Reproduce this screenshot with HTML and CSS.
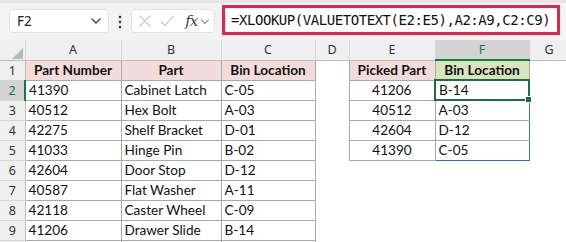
FILE: index.html
```html
<!DOCTYPE html>
<html lang="en">
<head>
  <meta charset="UTF-8">
  <title>XLOOKUP sheet</title>
  <link rel="stylesheet" href="styles.css">
</head>
<body>
  <div class="formula-bar">
    <div class="name-box">
      <span class="cell-ref">F2</span>
      <svg width="12" height="8" viewBox="0 0 12 8"><path d="M1.5 1.5 L6 6 L10.5 1.5" fill="none" stroke="#444" stroke-width="1.3"/></svg>
    </div>
    <div class="grip">
      <svg width="4" height="14" viewBox="0 0 4 14"><circle cx="2" cy="2" r="1.3" fill="#333"/><circle cx="2" cy="7" r="1.3" fill="#333"/><circle cx="2" cy="12" r="1.3" fill="#333"/></svg>
    </div>
    <div class="func-box">
      <svg width="14" height="14" viewBox="0 0 14 14"><path d="M1.5 1.5 L12.5 12.5 M12.5 1.5 L1.5 12.5" stroke="#c4c4c4" stroke-width="1.2"/></svg>
      <svg width="15" height="14" viewBox="0 0 15 14"><path d="M1 7.5 L5 11.5 L14 2" fill="none" stroke="#c4c4c4" stroke-width="1.2"/></svg>
      <span class="fx">fx</span>
      <svg width="10" height="7" viewBox="0 0 10 7"><path d="M1 1.5 L5 5.5 L9 1.5" fill="none" stroke="#888" stroke-width="1.1"/></svg>
    </div>
    <div class="formula-input">=XLOOKUP(VALUETOTEXT(E2:E5),A2:A9,C2:C9)</div>
  </div>

  <table class="sheet">
    <colgroup>
      <col class="w-rh"><col class="w-a"><col class="w-b"><col class="w-c"><col class="w-d"><col class="w-e"><col class="w-f"><col class="w-g">
    </colgroup>
    <tr class="col-heads">
      <th class="corner"><div class="corner-mark"><svg width="11" height="11" viewBox="0 0 11 11"><path d="M11 0 L11 11 L0 11 Z" fill="#b8b8b8"/></svg></div></th>
      <th>A</th><th>B</th><th>C</th><th>D</th><th>E</th><th class="active">F</th><th>G</th>
    </tr>
    <tr>
      <th class="rh">1</th>
      <td class="box head pink">Part Number</td><td class="box head pink">Part</td><td class="box head pink">Bin Location</td>
      <td></td>
      <td class="box head pink">Picked Part</td><td class="box head green">Bin Location</td><td></td>
    </tr>
    <tr>
      <th class="rh active">2</th>
      <td class="box">41390</td><td class="box">Cabinet Latch</td><td class="box">C-05</td>
      <td></td>
      <td class="box num">41206</td><td class="box spill selected">B-14</td><td></td>
    </tr>
    <tr>
      <th class="rh">3</th>
      <td class="box">40512</td><td class="box">Hex Bolt</td><td class="box">A-03</td>
      <td></td>
      <td class="box num">40512</td><td class="box spill">A-03</td><td></td>
    </tr>
    <tr>
      <th class="rh">4</th>
      <td class="box">42275</td><td class="box">Shelf Bracket</td><td class="box">D-01</td>
      <td></td>
      <td class="box num">42604</td><td class="box spill">D-12</td><td></td>
    </tr>
    <tr>
      <th class="rh">5</th>
      <td class="box">41033</td><td class="box">Hinge Pin</td><td class="box">B-02</td>
      <td></td>
      <td class="box num">41390</td><td class="box spill last">C-05</td><td></td>
    </tr>
    <tr>
      <th class="rh">6</th>
      <td class="box">42604</td><td class="box">Door Stop</td><td class="box">D-12</td>
      <td></td><td></td><td></td><td></td>
    </tr>
    <tr>
      <th class="rh">7</th>
      <td class="box">40587</td><td class="box">Flat Washer</td><td class="box">A-11</td>
      <td></td><td></td><td></td><td></td>
    </tr>
    <tr>
      <th class="rh">8</th>
      <td class="box">42118</td><td class="box">Caster Wheel</td><td class="box">C-09</td>
      <td></td><td></td><td></td><td></td>
    </tr>
    <tr>
      <th class="rh">9</th>
      <td class="box">41206</td><td class="box">Drawer Slide</td><td class="box">B-14</td>
      <td></td><td></td><td></td><td></td>
    </tr>
    <tr>
      <th class="rh"></th>
      <td class="box"></td><td class="box"></td><td class="box"></td>
      <td></td><td></td><td></td><td></td>
    </tr>
  </table>
</body>
</html>
```

FILE: styles.css
```css
body {
  margin: 0;
  background-color: white;
  font-family: Lato, "Noto Sans", sans-serif;
  overflow: hidden;
}

.formula-bar {
  height: 37px;
  border-top: 3px solid #e6e6e6;
  background-color: #f3f3f3;
  display: flex;
  align-items: flex-start;
}

.name-box {
  margin: 6px 0 0 9px;
  width: 100px;
  height: 24px;
  box-sizing: border-box;
  background-color: white;
  border: 1px solid #e3e3e3;
  border-radius: 4px;
  display: flex;
  align-items: center;
  justify-content: space-between;
  padding: 0 6px 0 7px;
}

.cell-ref {
  font-family: "Noto Sans", sans-serif;
  font-size: 13.5px;
  color: #222;
}

.grip {
  margin: 12px 0 0 9px;
  width: 4px;
  height: 14px;
  display: flex;
}

.func-box {
  margin: 6px 0 0 9px;
  width: 84px;
  height: 24px;
  box-sizing: border-box;
  background-color: white;
  border: 1px solid #e3e3e3;
  border-radius: 4px;
  display: flex;
  align-items: center;
  gap: 8px;
  padding: 0 4px 0 6px;
}

.fx {
  font-family: "DejaVu Serif", serif;
  font-style: italic;
  font-size: 15px;
  color: #444;
  margin-left: 3px;
  margin-right: -5px;
  letter-spacing: -1px;
}

.formula-input {
  margin: 2px 0 0 7px;
  width: 338px;
  height: 30px;
  box-sizing: border-box;
  background-color: white;
  border: 3px solid #e2254d;
  padding-left: 6px;
  font-family: "DejaVu Sans Mono", monospace;
  font-size: 14px;
  letter-spacing: -0.45px;
  line-height: 24px;
  color: #111;
}

.sheet {
  border-collapse: collapse;
  table-layout: fixed;
  width: 569px;
}

.w-rh { width: 25px; }
.w-a { width: 96px; }
.w-b { width: 100px; }
.w-c { width: 94px; }
.w-d { width: 34px; }
.w-e { width: 86px; }
.w-f { width: 94px; }
.w-g { width: 40px; }

.sheet tr {
  height: 20px;
}

.sheet th {
  background-color: #efefef;
  font-family: "Noto Sans", sans-serif;
  font-weight: normal;
  font-size: 12.5px;
  color: #333;
  padding: 0;
  text-align: center;
}

.col-heads th {
  border-right: 1px solid #d6d6d6;
  border-bottom: 1px solid #bdbdbd;
}

.col-heads th.active {
  background-color: #d3d3d3;
  color: #107c41;
  border-bottom: 2px solid #107c41;
}

.corner-mark {
  display: flex;
  justify-content: flex-end;
  align-items: flex-end;
  height: 19px;
  padding-right: 2px;
}

.rh {
  border-bottom: 1px solid #d6d6d6;
  border-right: 1px solid #bdbdbd;
}

.sheet th.rh.active {
  background-color: #d3d3d3;
  color: #107c41;
  border-right: 2px solid #107c41;
}

.sheet td {
  padding: 0 3px;
  font-size: 13.6px;
  color: #111;
  white-space: nowrap;
  overflow: hidden;
}

.box {
  border: 1px solid #a9a9a9;
}

.head {
  font-weight: bold;
  text-align: center;
}

.pink {
  background-color: #f2dcdb;
}

.green {
  background-color: #d8e4bc;
}

.num {
  text-align: center;
}

.sheet td.spill {
  border-left: 1px solid #2f6fd1;
  border-right: 1px solid #2f6fd1;
}

.sheet td.spill.last {
  border-bottom: 1px solid #2f6fd1;
}

.sheet td.selected {
  border: 2px solid #1d6f42;
  position: relative;
  overflow: visible;
}

.sheet td.selected::after {
  content: "";
  position: absolute;
  right: -4px;
  bottom: -4px;
  width: 5px;
  height: 5px;
  background-color: #1d6f42;
  border: 1px solid white;
}
```
